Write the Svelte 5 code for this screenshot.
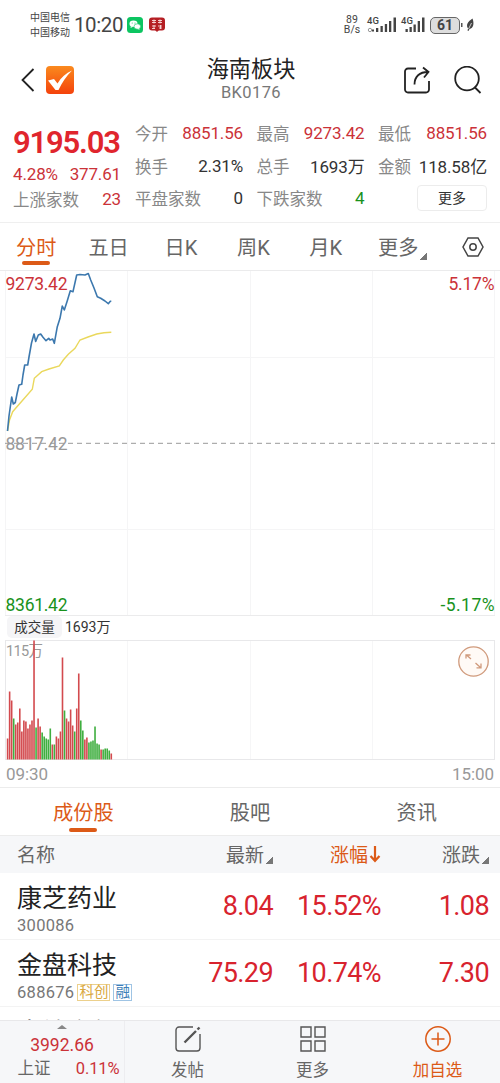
<script lang="ts">
  type Quote = { label: string; value: string; tone?: string };

  const quotes: Quote[] = [
    { label: '今开', value: '8851.56', tone: 'up' },
    { label: '最高', value: '9273.42', tone: 'up' },
    { label: '最低', value: '8851.56', tone: 'up' },
    { label: '换手', value: '2.31%' },
    { label: '总手', value: '1693万' },
    { label: '金额', value: '118.58亿' },
    { label: '平盘家数', value: '0' },
    { label: '下跌家数', value: '4', tone: 'down' },
  ];

  const periods = ['分时', '五日', '日K', '周K', '月K', '更多'];
  const sections = ['成份股', '股吧', '资讯'];
  let period = $state(0);
  let section = $state(0);

  const stocks = [
    { name: '康芝药业', code: '300086', last: '8.04', pct: '15.52%', diff: '1.08', tags: [] },
    { name: '金盘科技', code: '688676', last: '75.29', pct: '10.74%', diff: '7.30', tags: ['科创', '融'] },
    { name: '中钨高新', code: '', last: '', pct: '', diff: '', tags: [] },
  ];

  const price =
    '7.5,161 9,146 11.7,127 13.3,134 15.3,132.500 17,124 19,115 21.7,114.300 23,105 24.700,95 27.700,95 29,87 31.500,73 34,64 35.700,71.500 38.300,65 40.700,64 43,67.300 46,70.700 48.700,68.300 50,70 52.700,69 54.300,73.300 57.300,56.700 60,48.300 62.300,36 64.300,40 67.300,30.700 70.300,20.700 73,21.700 76.700,5 80,4.500 85,5 88.300,3.500 90.700,10 94,18 97.300,26.700 100.700,28.300 105,31 108.300,33.700 110.300,31.300 111.300,31.300';
  const average =
    '7.5,161 9.500,150 12.7,141.700 15,139 22,131 32.300,119.300 34.300,108.300 41.700,101.700 49,99 59.300,96 63.300,90 68.300,84.300 75,78.300 80,70 88,67 96.700,64 104,62.700 111.300,62.300';

  // bar heights in px, one per minute; down marks the green ones
  const volumes = [
    21, 68, 59, 41, 35, 37, 51, 28, 39, 38, 31, 35, 39, 119, 32, 41, 33, 27, 23, 21, 20, 31, 15, 15, 23, 21, 28, 102,
    49, 41, 38, 50, 34, 28, 51, 86, 39, 29, 20, 22, 17, 18, 19, 33, 16, 15, 10, 10, 11, 11, 9, 6,
  ];
  const down = new Set([3, 14, 17, 18, 19, 20, 21, 23, 28, 33, 36, 37, 40, 41, 42, 43, 44, 45, 47, 48, 49, 50]);
</script>

<div class="app">
  <header class="status">
    <div class="carrier"><span>中国电信</span><span>中国移动</span></div>
    <span class="clock">10:20</span>
    <svg class="badge" width="16" height="16" viewBox="0 0 16 16">
      <rect width="16" height="16" rx="3.500" fill="#0cc561" />
      <ellipse cx="6.500" cy="6.800" rx="4" ry="3.300" fill="#fff" />
      <ellipse cx="10.300" cy="9.500" rx="3.300" ry="2.700" fill="#fff" stroke="#0cc561" stroke-width=".6" />
      <path d="M4 9l-.5 2 2-1zM12 11l.6 1.700-2-.8z" fill="#fff" />
      <circle cx="5.200" cy="6" r=".5" fill="#0cc561" /><circle cx="8" cy="6" r=".5" fill="#0cc561" />
    </svg>
    <svg class="badge second" width="16" height="16" viewBox="0 0 16 16">
      <rect y=".5" width="16" height="13" rx="3" fill="#b51f24" />
      <path
        d="M3 3.500h4M3 5.500h4M5 2.500v4M9 3.500h4M9 5.500h4M11 2.500v4M3 9h4M5 8v4M3 11.500h3M9 9h4M10 11h3M11.500 8v4"
        stroke="#f8dede"
        stroke-width=".9"
        fill="none"
      />
      <path d="M6 13h4l-2 2z" fill="#b51f24" />
    </svg>
    <div class="speed"><span>89</span><span>B/s</span></div>
    <svg class="radio" width="60" height="18" viewBox="0 0 60 18">
      <g fill="#444">
        <text x="-1" y="8" class="net">4G</text>
        <text x="33" y="8" class="net">4G</text>
        <circle cx="2" cy="14" r="1.700" fill="none" stroke="#999" />
        <path
          d="M4 13.500h2v2H4zM8 12h2.300v4H8zM12.500 10h2.300v6h-2.300zM16.800 8h2.300v8h-2.300zM21 5h2.300v11H21zM25.500 1.500H28V16h-2.500z"
        />
        <path
          d="M37.500 13h2.300v3h-2.300zM41.500 11h2.300v5h-2.300zM45.500 8.500h2.300V16h-2.300zM49.700 5H52v11h-2.300zM54 1.500h2.500V16H54z"
        />
      </g>
    </svg>
    <span class="battery">61</span>
    <svg width="14" height="16" viewBox="0 0 14 16">
      <path d="M0 6h1.500v4H0z" fill="#555" />
      <path d="M11.500 1.500c1.800 5 1.200 9.500-3 10.500l-1 2-1-.5.6-2C4.500 8 7 4.500 11.500 1.500z" fill="#444" />
      <path d="M7.500 12l3-6" stroke="#fff" stroke-width=".7" />
    </svg>
  </header>

  <nav class="nav">
    <div class="nav-left">
      <svg width="14" height="24" viewBox="0 0 14 24">
        <path d="M12.500 1L1.500 12l11 11" fill="none" stroke="#222" stroke-width="1.800" />
      </svg>
      <svg width="28" height="28" viewBox="0 0 28 28">
        <defs>
          <linearGradient id="brand" x1="0" y1="0" x2="0" y2="1">
            <stop offset="0" stop-color="#fa8a1e" />
            <stop offset="1" stop-color="#f4420c" />
          </linearGradient>
        </defs>
        <rect width="28" height="28" rx="4" fill="url(#brand)" />
        <path d="M2 14.500l6-1.500 3.500 4.500C15 11.500 20 7 26 4.500 20 10.500 16 16.500 12.500 24h-3z" fill="#fff" />
      </svg>
    </div>
    <div class="heading">
      <h1>海南板块</h1>
      <p>BK0176</p>
    </div>
    <div class="nav-right">
      <svg width="28" height="28" viewBox="0 0 28 28" fill="none" stroke="#222" stroke-width="1.800">
        <path d="M13 2.500H5a3 3 0 0 0-3 3v18a3 3 0 0 0 3 3h18a3 3 0 0 0 3-3v-8.500" />
        <path d="M11.500 18.500C11.500 10.500 16.500 6 25 6M20 1.500l5.500 4.500-4.500 5.500" />
      </svg>
      <svg width="28" height="28" viewBox="0 0 28 28" fill="none" stroke="#222" stroke-width="1.800">
        <circle cx="13" cy="12.500" r="11.800" /><path d="M20.500 21l6 6" />
      </svg>
    </div>
  </nav>

  <section class="quote">
    <div class="headline up">
      <strong>9195.03</strong>
      <div class="pair"><span>4.28%</span><span>377.61</span></div>
      <div class="pair"><label>上涨家数</label><span>23</span></div>
    </div>
    <div class="grid">
      {#each quotes as q}
        <div class="pair"><label>{q.label}</label><span class={q.tone}>{q.value}</span></div>
      {/each}
      <button class="more">更多</button>
    </div>
  </section>

  <div class="periods">
    {#each periods as p, i}
      <button class:active={period === i} onclick={() => (period = i)}
        >{p}{#if i === 5}<i class="corner"></i>{/if}</button
      >
    {/each}
    <svg width="22" height="20" viewBox="0 0 22 20" fill="none" stroke="#444" stroke-width="1.500">
      <path d="M6 1h10l5 9-5 9H6l-5-9z" /><circle cx="11" cy="10" r="3.200" />
    </svg>
  </div>

  <svg class="chart" width="500" height="346" viewBox="0 0 500 346">
    <path
      d="M0 .5h500M5.500 0v346M494.500 0v346M127.500 0v346M250.500 0v346M372.500 0v346M5 87.500h490M5 259.500h490"
      stroke="#f5f5f6"
    />
    <path d="M0 .5h500M5 345.500h490" stroke="#ebebec" />
    <path d="M5 173.300h490" stroke="#999" stroke-dasharray="5 4" />
    <polyline points={average} fill="none" stroke="#ead85c" stroke-width="1.400" />
    <polyline points={price} fill="none" stroke="#3c78ae" stroke-width="1.600" stroke-linejoin="round" />
    <text x="5.500" y="19.500" textLength="62" class="up">9273.42</text>
    <text x="448.500" y="19.500" textLength="46" class="up">5.17%</text>
    <text x="5.500" y="180" textLength="62" fill="#999">8817.42</text>
    <text x="5.500" y="341" textLength="62" class="down">8361.42</text>
    <text x="440.500" y="341" textLength="54" class="down">-5.17%</text>
  </svg>

  <div class="volume-head"><span class="chip">成交量</span><span>1693万</span></div>

  <svg class="chart" width="500" height="147" viewBox="0 0 500 147">
    <path d="M127.500 1v119M250.500 1v119M372.500 1v119" stroke="#f6f6f7" />
    <rect x="5.500" y=".5" width="489" height="119" fill="none" stroke="#e8e8ea" />
    <text x="6" y="15.500" textLength="37" class="scale">115万</text>
    {#each volumes as v, i}
      <rect x={6.8 + i * 2.033} y={119.5 - v} width="1.600" height={v} fill={down.has(i) ? '#3fae3f' : '#d34a4e'} />
    {/each}
    <circle cx="473.500" cy="21.500" r="14.700" fill="#fffaf6" stroke="#d09a7c" stroke-width="1.300" />
    <path
      d="M471 19l-4.500-4M466 18.500V15h4.500M475.500 23l5 4.500M481 23.500v4.300h-4.500"
      fill="none"
      stroke="#d09a7c"
      stroke-width="1.300"
    />
    <text x="6" y="139.500" textLength="42" class="time">09:30</text>
    <text x="452" y="139.500" textLength="42" class="time">15:00</text>
  </svg>

  <div class="sections">
    {#each sections as s, i}
      <button class:active={section === i} onclick={() => (section = i)}>{s}</button>
    {/each}
  </div>

  <div class="row thead">
    <span>名称</span>
    <span class="num">最新<i class="corner"></i></span>
    <span class="num sorted"
      >涨幅<svg width="13" height="18" viewBox="0 0 13 18" fill="none" stroke="#dc5a17" stroke-width="2.200">
        <path d="M7 1v15M2.500 11L7 15.800l4.500-4.800" />
      </svg></span
    >
    <span class="num">涨跌<i class="corner"></i></span>
  </div>

  <main class="list">
    {#each stocks as s}
      <div class="row stock">
        <div class="name">
          <h2>{s.name}</h2>
          <p>
            {s.code}{#each s.tags as t}<em class:blue={t === '融'}>{t}</em>{/each}
          </p>
        </div>
        <span class="num">{s.last}</span>
        <span class="num">{s.pct}</span>
        <span class="num">{s.diff}</span>
      </div>
    {/each}
  </main>

  <footer class="dock">
    <div class="index">
      <i class="caret"></i>
      <span class="up">3992.66</span>
      <div><label>上证</label><span class="up">0.11%</span></div>
    </div>
    <button>
      <svg width="26" height="26" viewBox="0 0 26 26" fill="none" stroke="#555" stroke-width="1.400">
        <path d="M18 1H4a3 3 0 0 0-3 3v18a3 3 0 0 0 3 3h18a3 3 0 0 0 3-3V8" />
        <path d="M9.500 16.500L21 5M22.500 3.500L24.500 1.500" stroke-width="2.400" />
      </svg>
      发帖
    </button>
    <button>
      <svg width="26" height="26" viewBox="0 0 26 26" fill="none" stroke="#555" stroke-width="1.400">
        <path d="M1 1h10v10H1zM15 1h10v10H15zM1 15h10v10H1zM15 15h10v10H15z" />
      </svg>
      更多
    </button>
    <button class="add">
      <svg width="26" height="26" viewBox="0 0 26 26" fill="none" stroke="currentColor" stroke-width="1.500">
        <circle cx="13" cy="13" r="12.200" /><path d="M13 6.500v13M6.500 13h13" />
      </svg>
      加自选
    </button>
  </footer>
</div>

<style>
  :global(body) {
    background: #fff;
  }
  .app {
    display: flex;
    flex-direction: column;
    width: 500px;
    height: 1083px;
    overflow: hidden;
    color: #333;
    font-family: Roboto, 'Noto Sans CJK SC', sans-serif;
    font-size: 17px;
  }
  h1,
  h2,
  p {
    margin: 0;
    font-weight: 400;
  }
  button {
    border: 0;
    padding: 0;
    background: none;
    color: inherit;
    font: inherit;
  }
  svg {
    display: block;
    flex: none;
  }
  .up {
    color: #cb3238;
    fill: #cb3238;
  }
  .down {
    color: #19921c;
    fill: #19921c;
  }

  .status {
    display: flex;
    align-items: center;
    box-sizing: border-box;
    height: 50px;
    padding: 0 25px 0 30px;
    color: #444;
  }
  .carrier,
  .speed {
    display: flex;
    flex-direction: column;
    font-size: 10px;
    line-height: 15px;
  }
  .clock {
    width: 48px;
    margin: 0 5px 0 4px;
    font-size: 20.5px;
    letter-spacing: -0.4px;
  }
  .badge.second {
    margin-left: 6px;
  }
  .speed {
    width: 20px;
    margin: 0 0 0 auto;
    align-items: center;
    line-height: 10px;
    font-size: 10.5px;
  }
  .radio {
    margin: 0 2px 0 0;
    overflow: visible;
  }
  .net {
    font-size: 9.5px;
    font-weight: 500;
  }
  .speed {
    margin-right: 6px;
  }
  .battery {
    box-sizing: border-box;
    width: 30px;
    height: 17px;
    margin: 0 1px 0 0;
    border: 1.5px solid #666;
    border-radius: 5px;
    background: #ddd;
    font-size: 14px;
    font-weight: 700;
    line-height: 14px;
    text-align: center;
  }

  .nav {
    display: flex;
    align-items: center;
    justify-content: space-between;
    height: 60px;
    padding: 0 18px 0 21px;
  }
  .nav-left,
  .nav-right {
    display: flex;
    align-items: center;
    width: 78px;
    gap: 11px;
  }
  .nav-right {
    width: 79px;
    gap: 23px;
  }
  .heading {
    text-align: center;
  }
  .heading h1 {
    color: #222;
    font-size: 22.2px;
    line-height: 25px;
  }
  .heading p {
    color: #777;
    font-size: 16.5px;
    line-height: 21px;
    letter-spacing: 0.4px;
  }

  .quote {
    display: flex;
    box-sizing: border-box;
    height: 113px;
    padding: 7px 13px 1px;
    gap: 14px;
    border-bottom: 1px solid #efefef;
    letter-spacing: -0.15px;
  }
  .headline {
    display: flex;
    flex-direction: column;
    width: 108px;
  }
  .headline strong {
    height: 49px;
    color: #e0252d;
    font-size: 31px;
    font-weight: 600;
    line-height: 51px;
    letter-spacing: -1.2px;
  }
  .headline .pair:nth-child(2) {
    height: 16px;
    line-height: 16px;
  }
  .headline .pair:nth-child(3) {
    height: 33px;
  }
  .pair {
    display: flex;
    align-items: center;
    justify-content: space-between;
  }
  .pair label {
    color: #888;
    font-size: 16.5px;
    letter-spacing: 0;
  }
  .grid {
    display: grid;
    grid-template-columns: 108px 108px 109px;
    grid-template-rows: 32.5px 32.5px 32.5px;
    gap: 0 13.5px;
  }
  .more {
    align-self: center;
    justify-self: end;
    box-sizing: border-box;
    width: 70px;
    height: 26px;
    border: 1px solid #ececec;
    border-radius: 4px;
    font-size: 14px;
    line-height: 22px;
  }

  .periods {
    display: grid;
    grid-template-columns: repeat(5, 72.4px) 64px 1fr;
    height: 47px;
    align-items: center;
  }
  .periods button,
  .sections button {
    position: relative;
    height: 100%;
    color: #666;
    font-size: 20.2px;
  }
  .periods svg {
    justify-self: end;
    margin-right: 16px;
  }
  .periods button:nth-child(6) {
    padding-left: 16px;
    white-space: nowrap;
  }
  .periods .active,
  .sections .active {
    color: #dc5a17;
  }
  .active::after {
    content: '';
    position: absolute;
    bottom: 5px;
    left: calc(50% - 14px);
    width: 28px;
    height: 4px;
    border-radius: 2px;
    background: #dc5a17;
  }
  .corner {
    display: inline-block;
    width: 7px;
    height: 7px;
    margin-left: 2px;
    background: linear-gradient(135deg, transparent 48%, #777 50%);
    vertical-align: -5px;
  }

  .chart text {
    font-size: 17.5px;
  }
  .chart .scale {
    fill: #999;
    font-size: 14.5px;
  }
  .chart .time {
    fill: #999;
    font-size: 17px;
  }
  .volume-head {
    display: flex;
    align-items: center;
    height: 24px;
    padding-left: 7px;
    gap: 3px;
    font-size: 14px;
    line-height: 20px;
  }
  .volume-head > span {
    margin-top: -2px;
  }
  .chip {
    width: 55px;
    height: 22px;
    border-radius: 5px;
    background: #f5f5f7;
    font-size: 13.5px;
    line-height: 23px;
    text-align: center;
  }

  .sections {
    display: grid;
    grid-template-columns: repeat(3, 1fr);
    box-sizing: border-box;
    height: 49px;
    border-top: 1px solid #ececec;
    border-bottom: 1px solid #ececec;
  }
  .sections .active::after {
    bottom: 3px;
  }

  .row {
    display: grid;
    grid-template-columns: 165px 91px 108px 108px;
    box-sizing: border-box;
    padding: 0 11px 0 17px;
    align-items: center;
  }
  .num {
    display: flex;
    align-items: center;
    justify-content: flex-end;
  }
  .thead {
    flex: none;
    height: 37px;
    padding-bottom: 2px;
    background: #f6f7f9;
    color: #666;
    font-size: 19px;
  }
  .thead .corner {
    align-self: flex-end;
    margin: 0 0 3px 2px;
  }
  .sorted {
    color: #dc5a17;
  }
  .list {
    flex: 1;
    min-height: 0;
    overflow: hidden;
  }
  .stock {
    height: 67px;
    border-bottom: 1px solid #f3f3f3;
  }
  .stock .num {
    color: #d8232e;
    font-size: 27px;
    letter-spacing: -0.6px;
    line-height: 34px;
  }
  .name {
    padding-top: 9px;
  }
  .name h2 {
    color: #222;
    font-size: 25px;
    line-height: 30px;
  }
  .name p {
    display: flex;
    align-items: center;
    height: 23px;
    color: #777;
    font-size: 16.5px;
    line-height: 23px;
    letter-spacing: 0.3px;
    gap: 3px;
  }
  .name em {
    border: 1px solid #ecd08c;
    padding: 0 1px;
    color: #d9a840;
    font-size: 14.5px;
    font-style: normal;
    letter-spacing: 0;
    line-height: 15px;
  }
  .name em.blue {
    border-color: #9fc4e4;
    color: #3e7fb8;
  }

  .dock {
    display: grid;
    grid-template-columns: repeat(4, 125px);
    box-sizing: border-box;
    flex: none;
    height: 63px;
    border-top: 1px solid #e8e8ea;
    background: #f6f7f9;
    color: #666;
  }
  .dock button {
    display: flex;
    flex-direction: column;
    align-items: center;
    padding-top: 5px;
    font-size: 16.5px;
    line-height: 37px;
  }
  .dock .add {
    color: #dc5a17;
  }
  .index {
    display: flex;
    flex-direction: column;
    align-items: center;
    border-right: 1px solid #ededf0;
    font-size: 17.5px;
    line-height: 24px;
  }
  .index div {
    display: flex;
    justify-content: space-between;
    width: 102px;
    margin-left: 13px;
    font-size: 16.5px;
    letter-spacing: -0.1px;
  }
  .caret {
    margin: 4px 0;
    border: 5px solid transparent;
    border-top: 0;
    border-bottom: 4px solid #888;
    height: 0;
  }
</style>
